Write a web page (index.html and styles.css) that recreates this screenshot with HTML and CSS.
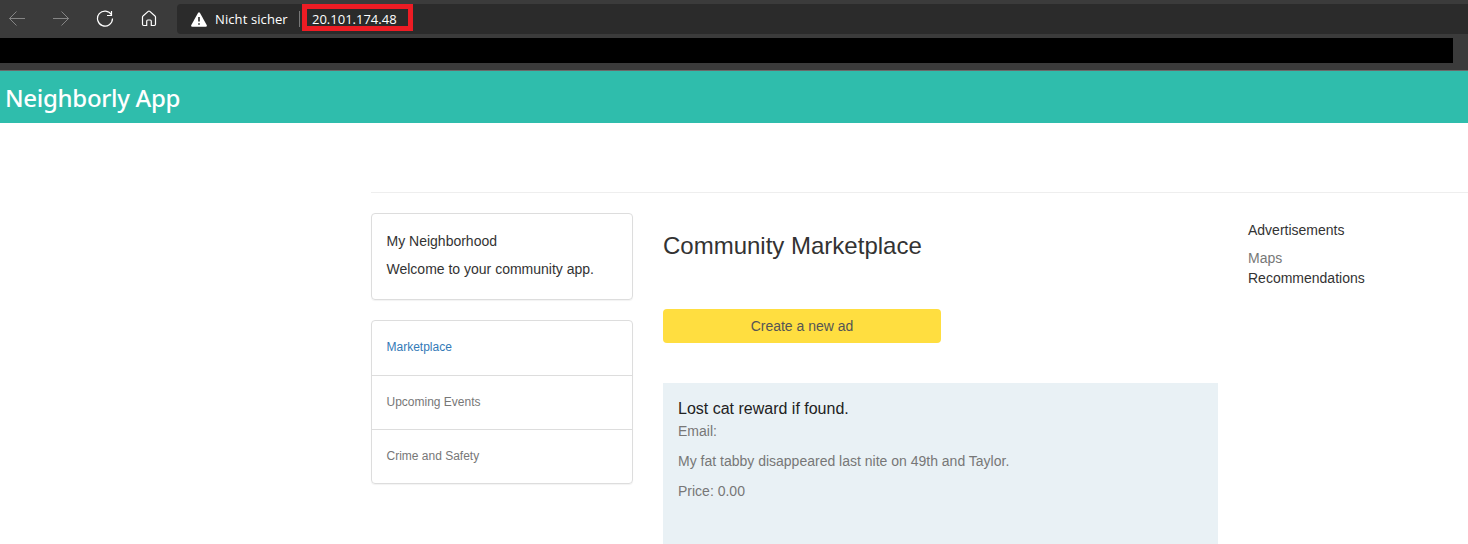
FILE: index.html
```html
<!DOCTYPE html>
<html lang="en">
<head>
<meta charset="utf-8">
<title>Neighborly App</title>
<link rel="stylesheet" href="styles.css">
</head>
<body>
<div class="browser">
  <div class="toolbar">
    <nav class="nav-icons">
      <svg class="icon dim" viewBox="0 0 18 18"><path d="M17 9.500H1.200M8.500 2.500l-7 7 7 7"/></svg>
      <svg class="icon dim" viewBox="0 0 18 18"><path d="M1 9.500h15.800M9.500 2.500l7 7-7 7"/></svg>
      <svg class="icon" viewBox="0 0 18 18"><path d="M15.500 5.800A7.500 7.500 0 1 0 16.500 9.500M15.500 2v4.500H11"/></svg>
      <svg class="icon" viewBox="0 0 18 18"><path d="M2.500 8v7.300q0 1.200 1.200 1.200h3v-4.300q0-1.200 1.200-1.200h2.200q1.200 0 1.200 1.200v4.300h3q1.200 0 1.200-1.200V8q0-.6-.5-1L9.800 2.400q-.8-.7-1.600 0L3 7q-.5.400-.5 1z"/></svg>
    </nav>
    <div class="address">
      <svg class="warning" viewBox="0 0 16 15"><path d="M7 .9q1-1.500 2 0l6.700 12.200q.7 1.500-1 1.700H1.300q-1.700-.2-1-1.700z" fill="#fff"/><path d="M8 5v4.500M8 11.200v1.600" stroke="#2b2b2b" stroke-width="1.600"/></svg>
      <span class="insecure">Nicht sicher</span>
      <span class="separator"></span>
      <span class="highlight"><span class="host">20.101.174.48</span></span>
    </div>
  </div>
  <div class="bookmarks"></div>
</div>
<header class="site-header"><span class="brand">Neighborly App</span></header>
<main class="container">
  <hr class="rule">
  <div class="columns">
    <aside class="sidebar">
      <section class="card intro">
        <p>My Neighborhood</p>
        <p>Welcome to your community app.</p>
      </section>
      <ul class="card menu">
        <li class="active">Marketplace</li>
        <li>Upcoming Events</li>
        <li>Crime and Safety</li>
      </ul>
    </aside>
    <section class="market">
      <h1>Community Marketplace</h1>
      <button class="create" type="button">Create a new ad</button>
      <article class="ad">
        <h2>Lost cat reward if found.</h2>
        <p>Email:</p>
        <p>My fat tabby disappeared last nite on 49th and Taylor.</p>
        <p>Price: 0.00</p>
      </article>
    </section>
    <aside class="links">
      <p class="links-title">Advertisements</p>
      <p class="muted">Maps</p>
      <p>Recommendations</p>
    </aside>
  </div>
</main>
</body>
</html>
```
FILE: styles.css
```css
* { box-sizing: border-box; }
body {
  margin: 0;
  background: #fff;
  color: #333;
  font: 14px/20px "Liberation Sans", Arial, sans-serif;
}
p, h1, h2, ul { margin: 0; padding: 0; font-weight: 400; }

.browser { height: 71px; background: #3b3b3b; border-bottom: 1px solid #6b6b6b; }
.toolbar { display: flex; height: 38px; padding-top: 4px; }
.nav-icons { display: flex; gap: 26px; width: 177px; padding: 5px 0 0 8px; }
.icon { flex: none; width: 18px; height: 18px; fill: none; stroke: #fff; stroke-width: 1.2; }
.icon.dim { stroke: #858585; stroke-width: 1; }
.address {
  display: flex;
  align-items: center;
  flex: 1;
  height: 30px;
  padding-left: 14px;
  border-radius: 4px 0 0 4px;
  background: #2b2b2b;
  color: #fff;
  font: 13px/18px "Open Sans", "Noto Sans", sans-serif;
}
.warning { width: 16px; height: 15px; margin-right: 8px; fill: none; }
.insecure { width: 84px; letter-spacing: .1px; white-space: nowrap; }
.separator { width: 1px; height: 16px; margin-right: 2px; background: #777; }
.highlight {
  display: flex;
  align-items: center;
  align-self: flex-start;
  width: 111px;
  height: 27px;
  padding: 2px 0 0 5px;
  border: 5px solid #ed1c24;
}
.bookmarks { width: 1453px; height: 25px; background: #000; }

.site-header { height: 52px; padding: 9px 0 0 5px; background: #2fbdac; }
.brand { display: block; color: #fff; font: 500 24px/36px "Noto Sans", sans-serif; letter-spacing: -.3px; }

.container { margin-left: 371px; padding-top: 69px; }
.rule { margin: 0 0 20px; border: 0; border-top: 1px solid #eee; }
.columns { display: flex; gap: 30px; }
.sidebar { width: 262px; }
.card {
  border: 1px solid #ddd;
  border-radius: 4px;
  box-shadow: 0 1px 1px rgba(0, 0, 0, .05);
}
.intro { height: 87px; margin-bottom: 20px; padding: 17px 14.500px; }
.intro p + p { margin-top: 8px; }
.menu { list-style: none; color: #777; font-size: 12px; }
.menu li { height: 54px; padding: 16px 14.500px; border-bottom: 1px solid #ddd; }
.menu .active { height: 55px; color: #337ab7; }
.menu li:last-child { height: 53px; border-bottom: 0; }

.market { width: 555px; }
.market h1 { padding-top: 20px; font-size: 24px; line-height: 26px; }
.create {
  display: block;
  width: 278px;
  height: 34px;
  margin: 50px 0 40px;
  border: 0;
  border-radius: 4px;
  background: #ffde40;
  color: #555;
  font: inherit;
}
.ad { height: 161px; padding: 16px 15px; background: #e9f1f5; color: #777; }
.ad h2 { margin-bottom: 2px; color: #222; font-size: 16px; line-height: 20px; }
.ad p { margin-bottom: 10px; }
.links { padding-top: 7px; }
.links-title { margin-bottom: 8px; }
.muted { color: #777; }
```
